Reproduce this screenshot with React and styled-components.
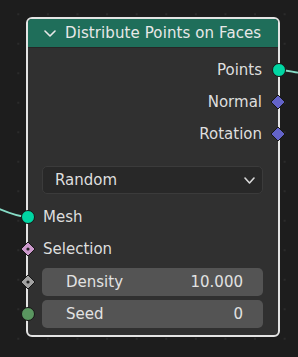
import React from 'react'
import styled, { createGlobalStyle } from 'styled-components'

const GlobalStyle = createGlobalStyle`
  html, body {
    margin: 0;
    padding: 0;
    background: #1d1d1d;
  }
  body {
    font-family: "DejaVu Sans", "Liberation Sans", sans-serif;
  }
`

// node editor canvas with its dot grid
const Canvas = styled.div`
  position: relative;
  width: 298px;
  height: 357px;
  overflow: hidden;
  box-sizing: border-box;
  padding: 17px 0 0 26px;
  background-color: #1d1d1d;
  background-image: radial-gradient(circle, #2b2b2b 1px, transparent 1.4px);
  background-size: 29.6px 29.5px;
  background-position: 3.5px -0.5px;
`

const Wires = styled.svg`
  position: absolute;
  left: 0;
  top: 0;
  pointer-events: none;
`

const Node = styled.div`
  position: relative;
  width: 254px;
  box-sizing: border-box;
  border: 2px solid #e4e4e4;
  border-radius: 6px;
  background: #303030;
`

const Header = styled.div`
  height: 29px;
  display: flex;
  align-items: center;
  gap: 9px;
  padding-left: 16px;
  background: #1f6e5a;
  border-radius: 4px 4px 0 0;
  color: #e8e8e8;
  font-size: 15px;
  letter-spacing: 0.1px;
  border-bottom: 1px solid #262626;
  box-sizing: border-box;
`

const Body = styled.div`
  padding: 6px 0 7px;
`

const Row = styled.div`
  position: relative;
  height: ${(p) => p.$h || 32}px;
  margin-top: ${(p) => p.$mt || 0}px;
  display: flex;
  align-items: center;
  justify-content: ${(p) => (p.$out ? 'flex-end' : 'flex-start')};
  padding: ${(p) => (p.$out ? '0 16px 0 0' : '0 15px 0 15px')};
  color: #dedede;
  font-size: 15px;
`

const FieldRow = styled(Row)`
  padding: 0 15px 0 14px;
`

const Socket = styled.span`
  position: absolute;
  top: 50%;
  ${(p) => (p.$out ? 'right: -7.5px;' : 'left: -7.5px;')}
  width: 14px;
  height: 14px;
  margin-top: -7px;
  box-sizing: border-box;
  border-radius: 50%;
  background: ${(p) => p.$color};
  border: 1px solid #161616;
`

// sockets drawn as svg so the rotated square keeps its size
const DiamondIcon = styled.svg`
  position: absolute;
  top: 50%;
  ${(p) => (p.$out ? 'right: -8px;' : 'left: -8px;')}
  margin-top: -8px;
`

const Diamond = ({ $out, $color, $dot }) => (
  <DiamondIcon $out={$out} width="16" height="16" viewBox="0 0 16 16">
    <path d="M8 1 L15 8 L8 15 L1 8 Z" fill={$color} stroke="#161616" strokeWidth="1" />
    {$dot && <circle cx="8" cy="8" r="1.6" fill="#222" />}
  </DiamondIcon>
)

const Dropdown = styled.div`
  flex: 1;
  height: 28px;
  box-sizing: border-box;
  display: flex;
  align-items: center;
  justify-content: space-between;
  padding: 0 7px 0 12px;
  background: #282828;
  border: 1px solid #3b3b3b;
  border-radius: 5px;
  color: #dedede;
  font-size: 15px;
`

const Field = styled.div`
  flex: 1;
  height: 28px;
  box-sizing: border-box;
  display: flex;
  align-items: center;
  justify-content: space-between;
  padding: 0 20px 0 24px;
  background: #545454;
  border-radius: 5px;
  color: #e2e2e2;
  font-size: 15px;
`

const Chevron = ({ w = 12, h = 7, stroke = '#e8e8e8' }) => (
  <svg width={w} height={h} viewBox={`0 0 ${w} ${h}`}>
    <path
      d={`M1 1 L${w / 2} ${h - 1} L${w - 1} 1`}
      fill="none"
      stroke={stroke}
      strokeWidth="1.6"
      strokeLinecap="round"
      strokeLinejoin="round"
    />
  </svg>
)

const App = () => (
  <>
    <GlobalStyle />
    <Canvas>
      <Wires width="298" height="357">
        <path
          d="M279 70 C 288 70, 292 72, 300 73"
          stroke="#86dcc6"
          strokeWidth="1.8"
          fill="none"
        />
        <path
          d="M-30 200 C -5 204, 8 216, 27 217"
          stroke="#86dcc6"
          strokeWidth="1.8"
          fill="none"
        />
      </Wires>
      <Node>
        <Header>
          <Chevron />
          <span>Distribute Points on Faces</span>
        </Header>
        <Body>
          <Row $out>
            Points
            <Socket $out $color="#00d6a3" />
          </Row>
          <Row $out>
            Normal
            <Diamond $out $color="#6363c7" />
          </Row>
          <Row $out>
            Rotation
            <Diamond $out $color="#6363c7" />
          </Row>
          <FieldRow $h={28} $mt={16}>
            <Dropdown>
              <span>Random</span>
              <Chevron w={11} h={7} stroke="#d8d8d8" />
            </Dropdown>
          </FieldRow>
          <Row $mt={7}>
            Mesh
            <Socket $color="#00d6a3" />
          </Row>
          <Row>
            Selection
            <Diamond $color="#cc99cc" $dot />
          </Row>
          <FieldRow $h={28} $mt={3}>
            <Diamond $color="#a1a1a1" $dot />
            <Field>
              <span>Density</span>
              <span>10.000</span>
            </Field>
          </FieldRow>
          <FieldRow $h={28} $mt={4}>
            <Socket $color="#5a9660" />
            <Field>
              <span>Seed</span>
              <span>0</span>
            </Field>
          </FieldRow>
        </Body>
      </Node>
    </Canvas>
  </>
)

export default App
